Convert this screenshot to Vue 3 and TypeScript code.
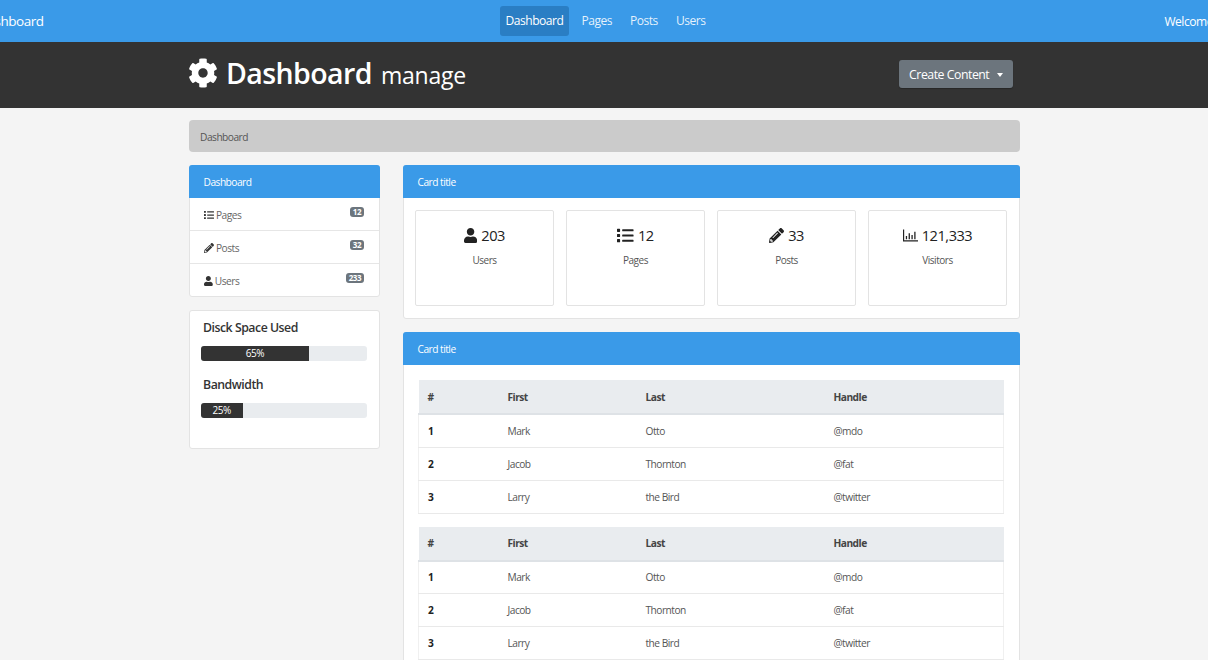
<script setup lang="ts">
// FontAwesome-style glyphs, drawn inline since there are no icon packages here
const icons = {
  cog: 'M487.4 315.7l-42.6-24.6c4.3-23.2 4.3-47 0-70.2l42.6-24.6c4.9-2.8 7.1-8.6 5.5-14-11.1-35.6-30-67.8-54.7-94.6-3.8-4.1-10-5.1-14.8-2.3L380.8 110c-17.9-15.4-38.5-27.3-60.8-35.1V25.8c0-5.6-3.9-10.5-9.4-11.7-36.7-8.2-74.3-7.8-109.2 0-5.5 1.2-9.4 6.1-9.4 11.7V75c-22.2 7.9-42.8 19.8-60.8 35.1L88.7 85.5c-4.9-2.8-11-1.9-14.8 2.3-24.7 26.7-43.6 58.9-54.7 94.6-1.7 5.4.6 11.2 5.5 14L67.3 221c-4.3 23.2-4.3 47 0 70.2l-42.6 24.6c-4.9 2.8-7.1 8.6-5.5 14 11.1 35.6 30 67.8 54.7 94.6 3.8 4.1 10 5.1 14.8 2.3l42.6-24.6c17.9 15.4 38.5 27.3 60.8 35.1v49.2c0 5.6 3.9 10.5 9.4 11.7 36.7 8.2 74.3 7.8 109.2 0 5.5-1.2 9.4-6.1 9.4-11.7v-49.2c22.2-7.9 42.8-19.8 60.8-35.1l42.6 24.6c4.9 2.8 11 1.9 14.8-2.3 24.7-26.7 43.6-58.9 54.7-94.6 1.5-5.5-.7-11.3-5.6-14.1zM256 336c-44.1 0-80-35.9-80-80s35.9-80 80-80 80 35.9 80 80-35.9 80-80 80z',
  list: 'M80 368H16a16 16 0 0 0-16 16v64a16 16 0 0 0 16 16h64a16 16 0 0 0 16-16v-64a16 16 0 0 0-16-16zm0-320H16A16 16 0 0 0 0 64v64a16 16 0 0 0 16 16h64a16 16 0 0 0 16-16V64a16 16 0 0 0-16-16zm0 160H16a16 16 0 0 0-16 16v64a16 16 0 0 0 16 16h64a16 16 0 0 0 16-16v-64a16 16 0 0 0-16-16zm416 176H176a16 16 0 0 0-16 16v32a16 16 0 0 0 16 16h320a16 16 0 0 0 16-16v-32a16 16 0 0 0-16-16zm0-320H176a16 16 0 0 0-16 16v32a16 16 0 0 0 16 16h320a16 16 0 0 0 16-16V80a16 16 0 0 0-16-16zm0 160H176a16 16 0 0 0-16 16v32a16 16 0 0 0 16 16h320a16 16 0 0 0 16-16v-32a16 16 0 0 0-16-16z',
  pencil: 'M497.9 142.1l-46.1 46.1c-4.7 4.7-12.3 4.7-17 0l-111-111c-4.7-4.7-4.7-12.3 0-17l46.1-46.1c18.7-18.7 49.1-18.7 67.9 0l60.1 60.1c18.8 18.7 18.8 49.1 0 67.9zM284.2 99.8L21.6 362.4.4 483.9c-2.9 16.4 11.4 30.6 27.8 27.8l121.5-21.3 262.6-262.6c4.7-4.7 4.7-12.3 0-17l-111-111c-4.8-4.7-12.4-4.7-17.1 0zM124.1 339.9c-5.5-5.5-5.5-14.3 0-19.8l154-154c5.5-5.5 14.3-5.5 19.8 0s5.5 14.3 0 19.8l-154 154c-5.5 5.5-14.3 5.5-19.8 0zM88 424h48v36.3l-64.5 11.3-31.1-31.1L51.7 376H88v48z',
  user: 'M224 256c70.7 0 128-57.3 128-128S294.7 0 224 0 96 57.3 96 128s57.3 128 128 128zm89.6 32h-16.7c-22.2 10.2-46.9 16-72.9 16s-50.6-5.8-72.9-16h-16.7C60.2 288 0 348.2 0 422.4V464c0 26.5 21.5 48 48 48h352c26.5 0 48-21.5 48-48v-41.6c0-74.2-60.2-134.4-134.4-134.4z',
  chart: 'M0 48h40v368h472v48H0zM96 272h44v112H96zM192 176h44v208h-44zM288 240h44v144h-44zM384 128h44v256h-44z',
}

const viewBoxes = {
  cog: '0 0 512 512',
  list: '0 0 512 512',
  pencil: '0 0 512 512',
  user: '0 0 448 512',
  chart: '0 0 512 512',
}

const navLinks = ['Dashboard', 'Pages', 'Posts', 'Users']

const sideItems = [
  { icon: icons.list, box: viewBoxes.list, label: 'Pages', count: 12 },
  { icon: icons.pencil, box: viewBoxes.pencil, label: 'Posts', count: 32 },
  { icon: icons.user, box: viewBoxes.user, label: 'Users', count: 233 },
]

const meters = [
  { label: 'Disck Space Used', value: 65 },
  { label: 'Bandwidth', value: 25 },
]

const stats = [
  { icon: icons.user, box: viewBoxes.user, value: '203', label: 'Users' },
  // list is cropped a little so it reads wider next to the number
  { icon: icons.list, box: '0 24 512 464', value: '12', label: 'Pages' },
  { icon: icons.pencil, box: viewBoxes.pencil, value: '33', label: 'Posts' },
  { icon: icons.chart, box: viewBoxes.chart, value: '121,333', label: 'Visitors' },
]

const rows = [
  { id: 1, first: 'Mark', last: 'Otto', handle: '@mdo' },
  { id: 2, first: 'Jacob', last: 'Thornton', handle: '@fat' },
  { id: 3, first: 'Larry', last: 'the Bird', handle: '@twitter' },
]
</script>

<template>
  <div class="page">
    <!-- top nav, wider than the window so both ends get cut off -->
    <nav class="navbar">
      <a class="brand">Dashboard</a>
      <ul class="nav-links">
        <li v-for="(link, i) in navLinks" :key="link" :class="{ active: i === 0 }">{{ link }}</li>
      </ul>
      <span class="welcome">Welcome, Admin</span>
    </nav>

    <header class="page-header">
      <div class="container header-row">
        <h1>
          <svg class="cog" :viewBox="viewBoxes.cog"><path :d="icons.cog" /></svg>
          Dashboard <small>manage</small>
        </h1>
        <button class="create-btn">Create Content <span class="caret" /></button>
      </div>
    </header>

    <div class="container">
      <div class="breadcrumb">Dashboard</div>

      <div class="columns">
        <aside class="sidebar">
          <div class="panel">
            <div class="panel-head">Dashboard</div>
            <div v-for="item in sideItems" :key="item.label" class="side-item">
              <span class="side-label">
                <svg class="side-icon" :viewBox="item.box"><path :d="item.icon" /></svg>
                {{ item.label }}
              </span>
              <span class="badge">{{ item.count }}</span>
            </div>
          </div>

          <div class="panel meters">
            <template v-for="m in meters" :key="m.label">
              <h4>{{ m.label }}</h4>
              <div class="progress">
                <div class="bar" :style="{ width: m.value + '%' }">{{ m.value }}%</div>
              </div>
            </template>
          </div>
        </aside>

        <main class="content">
          <div class="panel">
            <div class="panel-head">Card title</div>
            <div class="stats">
              <div v-for="s in stats" :key="s.label" class="stat">
                <div class="stat-value">
                  <svg class="stat-icon" :viewBox="s.box"><path :d="s.icon" /></svg>
                  {{ s.value }}
                </div>
                <div class="stat-label">{{ s.label }}</div>
              </div>
            </div>
          </div>

          <div class="panel">
            <div class="panel-head">Card title</div>
            <div class="tables">
              <table v-for="t in 2" :key="t">
                <thead>
                  <tr>
                    <th class="col-id">#</th>
                    <th class="col-first">First</th>
                    <th class="col-last">Last</th>
                    <th>Handle</th>
                  </tr>
                </thead>
                <tbody>
                  <tr v-for="r in rows" :key="r.id">
                    <th>{{ r.id }}</th>
                    <td>{{ r.first }}</td>
                    <td>{{ r.last }}</td>
                    <td>{{ r.handle }}</td>
                  </tr>
                </tbody>
              </table>
            </div>
          </div>
        </main>
      </div>
    </div>
  </div>
</template>

<style scoped>
.page {
  font-family: 'Open Sans', 'Noto Sans', sans-serif;
  background: #f4f4f4;
  color: #444;
  min-height: 100vh;
  overflow: hidden;
  letter-spacing: -0.03em;
}

.container {
  width: 831px;
  margin-left: 189px;
}

/* ─── NAV ─── */
.navbar {
  display: grid;
  grid-template-columns: 1fr auto 1fr;
  align-items: center;
  height: 42px;
  margin: 0 -60px 0 -57px;
  background: #3a9ae8;
  color: #fff;
}

.brand {
  justify-self: end;
  padding-right: 456px;
  font-size: 13.5px;
}

.nav-links {
  display: flex;
  gap: 6px;
  margin: 0;
  padding: 0;
  list-style: none;
  font-size: 12.05px;
}

.nav-links li {
  padding: 7px 6px;
  color: rgba(255, 255, 255, 0.88);
  border-radius: 3px;
  line-height: 16px;
}

.nav-links li.active {
  background: #2a7ec4;
  color: #fff;
}

.welcome {
  justify-self: start;
  padding-left: 453px;
  font-size: 12.05px;
  white-space: nowrap;
}

/* ─── HEADER ─── */
.page-header {
  height: 66px;
  box-sizing: border-box;
  padding-bottom: 2px;
  background: #333;
  display: flex;
  align-items: center;
}

.header-row {
  display: flex;
  align-items: center;
  justify-content: space-between;
  padding-right: 7px;
  box-sizing: border-box;
}

h1 {
  display: flex;
  align-items: baseline;
  gap: 9px;
  margin: 0;
  color: #fff;
  font-size: 28.5px;
  font-weight: 600;
  line-height: 40px;
  letter-spacing: -0.02em;
}

h1 small {
  font-size: 23px;
  font-weight: 400;
  letter-spacing: -0.01em;
}

.cog {
  width: 30px;
  height: 30px;
  margin-left: -1px;
  margin-right: -1px;
  margin-bottom: 3px;
  fill: #fff;
  align-self: center;
}

.create-btn {
  height: 28px;
  padding: 0 10px;
  border: 0;
  border-radius: 3px;
  background: #6c757d;
  box-shadow: 0 1px 1px rgba(0, 0, 0, 0.25);
  color: #fff;
  font: inherit;
  font-size: 12.3px;
  letter-spacing: inherit;
}

.caret {
  display: inline-block;
  margin-left: 5px;
  vertical-align: 2px;
  border-top: 4px solid #fff;
  border-left: 3.5px solid transparent;
  border-right: 3.5px solid transparent;
}

/* ─── BODY ─── */
.breadcrumb {
  margin-top: 12px;
  height: 32px;
  line-height: 34px;
  padding-left: 11px;
  border-radius: 4px;
  background: #cbcbcb;
  font-size: 10.2px;
  letter-spacing: -0.05em;
  color: #555;
}

.columns {
  display: grid;
  grid-template-columns: 191px 617px;
  gap: 23px;
  margin-top: 13px;
}

.sidebar,
.content {
  display: flex;
  flex-direction: column;
  gap: 13px;
}

.panel {
  background: #fff;
  border: 1px solid #e3e3e3;
  border-radius: 3px;
}

.panel-head {
  height: 33px;
  line-height: 35px;
  margin: -1px -1px 0;
  padding-left: 14.5px;
  border-radius: 3px 3px 0 0;
  background: #3a9ae8;
  color: #fff;
  font-size: 10.2px;
  letter-spacing: -0.05em;
}

.side-item {
  display: flex;
  justify-content: space-between;
  height: 32px;
  padding: 0 15px 0 14px;
  border-bottom: 1px solid #e6e6e6;
  font-size: 10.2px;
  letter-spacing: -0.05em;
  color: #666;
}

.side-item:last-child {
  border-bottom: 0;
}

.side-label {
  display: flex;
  align-items: center;
  gap: 2px;
  padding-top: 1px;
}

.side-icon {
  height: 10px;
  fill: #333;
}

.badge {
  align-self: flex-start;
  margin-top: 9px;
  padding: 0 3px;
  height: 10px;
  line-height: 10px;
  border-radius: 3px;
  background: #6c757d;
  color: #fff;
  font-size: 8px;
  font-weight: 700;
}

.meters {
  height: 99px;
  padding: 8px 12px 30px 11px;
}

.meters h4 {
  margin: 0 2px 9px;
  font-size: 12.3px;
  font-weight: 600;
  line-height: 18px;
  color: #333;
}

.progress {
  height: 15px;
  margin-bottom: 15px;
  border-radius: 3px;
  background: #e9ecef;
  overflow: hidden;
}

.bar {
  height: 100%;
  line-height: 15px;
  text-align: center;
  background: #333;
  color: #fff;
  font-size: 10px;
}

.stats {
  display: grid;
  grid-template-columns: repeat(4, 1fr);
  gap: 12px;
  padding: 12px 12px 12px 11px;
}

.stat {
  height: 96px;
  box-sizing: border-box;
  padding-top: 14px;
  border: 1px solid #e3e3e3;
  border-radius: 2px;
  text-align: center;
}

.stat-value {
  display: flex;
  align-items: center;
  justify-content: center;
  gap: 4px;
  font-size: 14.6px;
  line-height: 20px;
  color: #222;
}

.stat-icon {
  height: 15px;
  fill: #222;
}

.stat-label {
  margin-top: 8px;
  font-size: 10px;
  color: #555;
}

.tables {
  padding: 15px 15px 0 14px;
}

table {
  width: 100%;
  margin-bottom: 13px;
  border-collapse: collapse;
  table-layout: fixed;
  font-size: 10.2px;
  letter-spacing: -0.05em;
}

th,
td {
  box-sizing: border-box;
  height: 33px;
  padding: 0 9px;
  text-align: left;
  border: 0;
  border-bottom: 1px solid #e9e9e9;
  color: #555;
  font-weight: 400;
}

th {
  font-weight: 700;
  color: #222;
}

tbody th {
  border-left: 1px solid #f0f0f0;
}

tbody td:last-child {
  border-right: 1px solid #f0f0f0;
}

thead th {
  height: 34px;
  background: #e9ecef;
  color: #444;
  border-bottom: 2px solid #dee2e6;
}

.col-id {
  width: 80px;
}

.col-first {
  width: 138px;
}

.col-last {
  width: 188px;
}
</style>

<style>
html {
  overflow: hidden;
}
</style>
